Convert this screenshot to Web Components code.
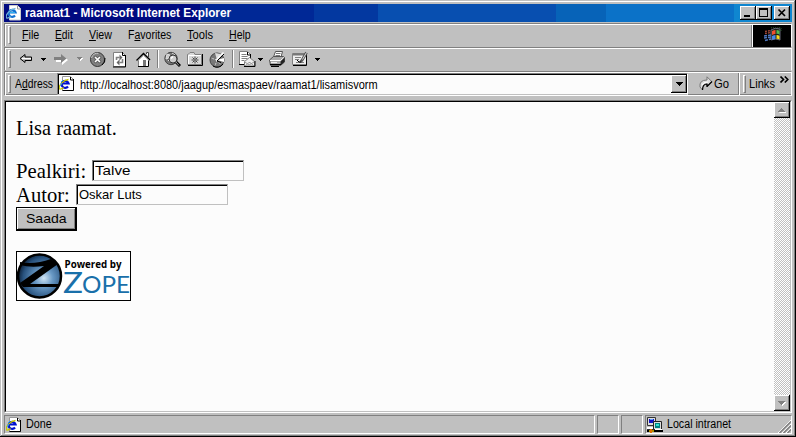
<!DOCTYPE html>
<html lang="et">
<head>
<meta charset="utf-8">
<title>raamat1 - Microsoft Internet Explorer</title>
<style>
  body {
    margin: 0;
    overflow: hidden;
    font-family: "Liberation Sans", sans-serif;
    font-size: 12px;
    color: #000;
  }
</style>
</head>
<body>
<browser-window>
  <title-bar>raamat1 - Microsoft Internet Explorer</title-bar>
  <menu-bar></menu-bar>
  <tool-bar></tool-bar>
  <address-bar>http://localhost:8080/jaagup/esmaspaev/raamat1/lisamisvorm</address-bar>
  <page-view slot="page"><book-form></book-form></page-view>
  <status-bar slot="status">Done</status-bar>
</browser-window>

<script>
/**
 * Registers an element whose open shadow root is cloned from a template.
 */
function define(name, html, setup) {
  const template = document.createElement('template');
  template.innerHTML = html;
  customElements.define(name, class extends HTMLElement {
    constructor() {
      super();
      this.attachShadow({ mode: 'open' });
      this.shadowRoot.appendChild(template.content.cloneNode(true));
    }

    connectedCallback() {
      if (setup) setup(this, this.shadowRoot);
    }
  });
}

// Drawings for the toolbar and the other bars, one user unit per pixel
const ICONS = {
  page: [16, 16, `
    <path d="M3.500 .5h8l3 3v11h-11z" fill="#fff" stroke="#999"/>
    <path d="M11.5 1v3h3M14.5 3v11.500h-11" fill="none" stroke="#000"/>
    <path d="M9 10.500a3.500 3.500 0 1 1 .6-3H4" fill="none" stroke="#0010d0" stroke-width="2.200"/>
    <path d="M.500 13C-1 10 4 4 9.500 3.500M.500 13q2 .5 4-1.500" fill="none" stroke="#c8c800" stroke-width="1.300"/>
    <path d="M2 6l2-2M1.500 10l1-3" stroke="#20a0ff"/>`],
  titlePage: [16, 16, `
    <path d="M3.500 .5h8l3 3v11.500h-11z" fill="#fff" stroke="#ccc"/>
    <path d="M11.500 1v3h3" fill="none" stroke="#999"/>
    <path d="M9 10.500a3.500 3.500 0 1 1 .6-3H4" fill="none" stroke="#1070d0" stroke-width="2.200"/>
    <path d="M.500 13C-1 10 4 4 9.500 3.500M.500 13q2 .5 4-1.500" fill="none" stroke="#70b0d8" stroke-width="1.300"/>
    <path d="M4 7.500h5" stroke="#30b0f0"/>`],
  back: [14, 12, `
    <path d="M1 5.5l5-4v2.5h6.5v3.500H6v2z" fill="#c0c0c0" stroke="#000"/>
    <path d="M3 5.500h9" stroke="#fff"/>`],
  forward: [15, 13, `
    <path d="M2 5h6V2l6 5-6 5V9H2z" fill="#fff"/>
    <path d="M0 4h7V1l5.500 4.500L7 10V7H0z" fill="#808080"/>`],
  stop: [17, 17, `
    <circle cx="8.500" cy="8.500" r="7" fill="#808080" stroke="#333"/>
    <path d="M2.500 7a6 6 0 0 1 7-4.700" fill="none" stroke="#c8c8c8"/>
    <path d="M13 14a7.500 7.500 0 0 0 3-7" fill="none" stroke="#000"/>
    <path d="M5.500 5.500l6 6m0-6l-6 6" stroke="#555" stroke-width="3"/>
    <path d="M6 6l5 5m0-5l-5 5" stroke="#fff" stroke-width="1.700"/>`],
  refresh: [14, 17, `
    <path d="M.500 1.500h9l3 3v11H.500z" fill="#fff" stroke="#808080"/>
    <path d="M9.500 1v3.500h3.500M12.500 4v12H0" fill="none" stroke="#000"/>
    <path d="M3.500 9V6.500h3M9.500 8v3.500h-3" fill="none" stroke="#808080" stroke-width="1.600"/>
    <path d="M6.500 3.500v6l3-3zM6.500 8.500v6l-3-3z" fill="#666"/>`],
  home: [15, 17, `
    <path d="M10.500 3V1.500h2V6" fill="#fff" stroke="#444"/>
    <path d="M2.500 9v6.500h10V9l-5-5z" fill="#fff"/>
    <path d="M2.500 9v6.500" stroke="#808080"/>
    <path d="M12.500 9v6.500H2" fill="none" stroke="#000"/>
    <path d="M.500 9.500l7-7 6.500 6.500" fill="none" stroke="#000" stroke-width="1.500"/>
    <path d="M1.500 10l6-5.500 5.500 5" fill="none" stroke="#aaa"/>
    <path d="M7 9h3v6H7z" fill="#777"/>`],
  search: [17, 17, `
    <circle cx="7" cy="7.500" r="6.200" fill="#777" stroke="#444"/>
    <path d="M3 3l3 1-1 3-3 1zM6 11l-2-2M8 2l3 2" fill="#ccc" stroke="#ddd"/>
    <path d="M12 11l4 4" stroke="#000" stroke-width="3"/>
    <path d="M12 11l3 3.500" stroke="#aaa"/>
    <circle cx="9" cy="8" r="4" fill="#ccc" stroke="#333"/>
    <path d="M7 7.500l2-2" stroke="#fff" stroke-width="1.500"/>`],
  favorites: [16, 16, `
    <path d="M1 3.500l2-2h4l1 2h6.500v10H.500v-10z" fill="#d8d8d8" stroke="#808080"/>
    <path d="M15.500 3v11.500H1" fill="none" stroke="#000"/>
    <path d="M1.500 13V4.500H14" fill="none" stroke="#fff"/>
    <path d="M8 5.500v7M4.500 9h7M5.500 6.500l5 5m0-5l-5 5" stroke="#444"/>
    <path d="M7.500 8.500h1v1h-1z" fill="#fff"/>`],
  history: [17, 17, `
    <circle cx="8" cy="9" r="7" fill="#777" stroke="#444"/>
    <path d="M8 9L2 7M8 9l-2 6M8 9l4 5" stroke="#ccc" stroke-dasharray="2 1"/>
    <path d="M8 9L6 2l6 1z" fill="#ddd"/>
    <path d="M8 9l7-2v4z" fill="#fff"/>
    <path d="M7 9.500L14.500 1.500" stroke="#fff" stroke-width="1.500"/>
    <path d="M8 10l4 1.500M8 10l7-7" stroke="#000"/>
    <path d="M14 13a7 7 0 0 1-10 2" fill="none" stroke="#000"/>`],
  mail: [17, 17, `
    <path d="M.500 .500h8l3 3v10H.500z" fill="#fff" stroke="#808080"/>
    <path d="M11.500 3v5M8.500 1v3h3M0 13.500h5" fill="none" stroke="#000"/>
    <path d="M2.500 3.500h5m-5 2h6m-6 2h6m-6 2h3" stroke="#808080"/>
    <path d="M5.500 10.500l5-4 5 4v4.500h-10z" fill="#eee" stroke="#808080"/>
    <path d="M6 15l4-3.500h1L15 15M6 11l4 3 5-3" fill="none" stroke="#999"/>
    <path d="M16 10v5.500H5" fill="none" stroke="#000"/>`],
  print: [17, 16, `
    <path d="M4.500 6l2-5.500h7L12 6z" fill="#fff" stroke="#555"/>
    <path d="M7 2.500h4.500M6.500 4.500h4.500" stroke="#777"/>
    <path d="M.500 9l4-3.500h10l1 1V11l-4 3.500h-10z" fill="#aaa" stroke="#555"/>
    <path d="M1 9.500h10.500l3.500-3" fill="none" stroke="#fff"/>
    <path d="M11.500 14.500v-4l4-4V11z" fill="#222"/>
    <path d="M1 13.500h11M2 15.500h8" stroke="#000"/>
    <path d="M2 11.500h6" stroke="#eee"/>`],
  edit: [17, 16, `
    <path d="M.500 2.500h14v11H.500z" fill="#eee" stroke="#808080"/>
    <path d="M1 3.500h14" stroke="#777" stroke-width="2"/>
    <path d="M14.500 3v11.500H1" fill="none" stroke="#000"/>
    <path d="M3 6.500h6m-6 2h4m-3 3h8" stroke="#808080"/>
    <path d="M14.500 1.500l-4 7-2 2.500" fill="none" stroke="#555" stroke-width="2.800"/>
    <path d="M14.500 1.500l-4 7" stroke="#ddd"/>
    <path d="M5 9l2 2h2" fill="none" stroke="#000"/>`],
  caret: [5, 3, '<path d="M0 0h5v1H4v1H3v1H2V2H1V1H0z"/>'],
  caretDim: [6, 4, `
    <path d="M1 1h5v1H5v1H4v1H3V3H2V2H1z" fill="#fff"/>
    <path d="M0 0h5v1H4v1H3v1H2V2H1V1H0z" fill="#808080"/>`],
  drop: [7, 4, '<path d="M0 0h7v1H6v1H5v1H4v1H3V3H2V2H1V1H0z"/>'],
  up: [8, 5, `
    <path d="M1 5h7V4H4V1z" fill="#fff"/>
    <path d="M3 0h1v1h1v1h1v1h1v1H0V3h1V2h1V1h1z" fill="#808080"/>`],
  down: [8, 5, `
    <path d="M1 1h7v1H7v1H6v1H5v1H4V4H3V3H2V2H1z" fill="#fff"/>
    <path d="M0 0h7v1H6v1H5v1H4v1H3V3H2V2H1V1H0z" fill="#808080"/>`],
  go: [14, 15, `
    <path d="M3.500 14L1 11Q0 4 8 4V.800l5 5-5 4.700V8q-4 0-4.500 6z" fill="#ddd" stroke="#777"/>
    <path d="M8 10.500l5-5M3.500 14q0-6 4.500-6v3" fill="none" stroke="#000" stroke-width="1.200"/>
    <path d="M3 9q1-3 6-3" fill="none" stroke="#fff"/>`],
  more: [9, 7, '<path d="M.500 .500l3 3-3 3M4.800 .500l3 3-3 3" fill="none" stroke="#000" stroke-width="1.600"/>'],
  intranet: [16, 16, `
    <path d="M.500 .500h8v8h-8z" fill="#ddd" stroke="#333"/>
    <path d="M2 2h5v4H2z" fill="#1010c8"/><path d="M3 2h3v1H3z" fill="#60a0ff"/>
    <path d="M0 10h7v2H0z" fill="#fff"/><path d="M0 12h7v1H0z" fill="#333"/>
    <path d="M6.500 4.500h8v8h-8z" fill="#ddd" stroke="#222"/>
    <path d="M8 6h5v5H8z" fill="#008080"/><path d="M9 7h3v2H9z" fill="#30e0d0"/>
    <path d="M0 14h16" stroke="#000" stroke-width="2"/>
    <path d="M8 12.500h7" stroke="#fff"/><path d="M2 14h5" stroke="#e8c000" stroke-width="1.500"/>
    <path d="M3 12h2v4H3z" fill="#e07000"/>`],
  flag: [19, 17, `
    <path d="M7 3q4-3 9-1v11q-4-2-9 0z" fill="#182018" stroke="#667"/>
    <path d="M8 4q2-1 3.500-1v4Q10 7 8 8z" fill="#f05030"/>
    <path d="M12.500 3q2 0 3 1v3.500q-2-1-3-.500z" fill="#50b850"/>
    <path d="M8 9q2-1 3.500-1v4q-1.500 0-3.500 1z" fill="#4888e8"/>
    <path d="M12.500 8q2 0 3 1v3.500q-2-1-3-.500z" fill="#f8d820"/>
    <path d="M1 4.500l6-1M1 6.500l6-1" stroke="#a04838" stroke-width="1.400" stroke-dasharray="2 1"/>
    <path d="M0 9l7-1M0 11l7-1M1 13.500l6-1.500" stroke="#5078c0" stroke-width="1.500" stroke-dasharray="3 1"/>
    <path d="M7 1q5-2 10 0v3" fill="none" stroke="#386838" stroke-dasharray="1 1"/>`],
  min: [16, 14, '<path d="M4 9h6v2H4z"/>'],
  max: [16, 14, '<path d="M3 2h9v9H3zM4 4v6h7V4z" fill-rule="evenodd"/>'],
  close: [16, 14, '<path d="M4.500 3.500l6.500 6.500M11 3.500l-6.500 6.500" stroke="#000" stroke-width="1.700"/>'],
};

define('ui-icon', `
  <style>
    :host { display: block; flex: none; }
    svg { display: block; }
  </style>
`, (host, root) => {
  if (root.querySelector('svg')) return;
  const [w, h, body] = ICONS[host.getAttribute('name')];
  root.innerHTML += `<svg width="${w}" height="${h}" viewBox="0 0 ${w} ${h}">${body}</svg>`;
});

// A label squeezed to a set width, like the narrow system bitmap font
define('ui-label', `
  <style>
    :host { display: block; flex: none; white-space: nowrap; line-height: 14px; }
    span { display: inline-block; transform-origin: 0 50%; }
  </style>
  <span><slot></slot></span>
`, (host, root) => {
  const span = root.querySelector('span');
  const width = Number(host.getAttribute('width'));
  host.style.width = `${width}px`;
  span.style.transform = `scaleX(${width / span.offsetWidth})`;
});

define('ui-grip', `
  <style>
    :host {
      display: block;
      flex: none;
      box-sizing: border-box;
      width: 3px;
      height: 18px;
      border: 1px solid;
      border-color: #fff #808080 #808080 #fff;
    }
  </style>
`);

define('ui-sep', `
  <style>
    :host {
      display: block;
      flex: none;
      width: 1px;
      height: 18px;
      background: #808080;
      border-right: 1px solid #fff;
    }
  </style>
`);

define('ui-button', `
  <style>
    :host {
      display: flex;
      flex: none;
      align-items: center;
      justify-content: center;
      box-sizing: border-box;
      width: 16px;
      height: 16px;
      background: #c0c0c0;
      box-shadow: inset -1px -1px #000, inset 1px 1px #fff, inset -2px -2px #808080;
    }
  </style>
  <slot></slot>
`);

define('browser-window', `
  <style>
    :host {
      display: flex;
      flex-direction: column;
      box-sizing: border-box;
      width: 796px;
      height: 437px;
      padding: 4px 4px 3px;
      background: #c0c0c0;
      box-shadow: inset -1px -1px #000, inset 1px 1px #c0c0c0, inset -2px -2px #808080, inset 2px 2px #fff;
    }
    ::slotted([slot="page"]) { margin-top: 4px; }
    ::slotted([slot="status"]) { margin-top: 2px; }
  </style>
  <slot></slot>
  <slot name="page"></slot>
  <slot name="status"></slot>
`);

define('title-bar', `
  <style>
    :host {
      display: flex;
      flex: none;
      align-items: center;
      box-sizing: border-box;
      height: 18px;
      padding: 0 2px;
      margin-bottom: 1px;
      color: #fff;
      font-weight: bold;
      background: linear-gradient(90deg, #000a80 196px, #002896 196px 310px, #0338a0 310px 374px,
        #084fb0 374px 552px, #0763b8 552px 602px, #0b72c8 602px 730px, #0f86d0 730px);
    }
    ui-label { margin: 0 auto 0 3px; }
    ui-button { height: 14px; }
    ui-button:last-child { margin-left: 2px; }
  </style>
  <ui-icon name="titlePage"></ui-icon>
  <ui-label width="206"><slot></slot></ui-label>
  <ui-button><ui-icon name="min"></ui-icon></ui-button>
  <ui-button><ui-icon name="max"></ui-icon></ui-button>
  <ui-button><ui-icon name="close"></ui-icon></ui-button>
`);

// Shared frame of the three bands under the title
const BAND = `
  :host {
    display: flex;
    flex: none;
    align-items: center;
    box-sizing: border-box;
    height: 24px;
    border: 1px solid #fff;
    border-color: #808080 #fff transparent #808080;
    box-shadow: inset 1px 1px #fff, 1px 0 #c0c0c0;
  }
  ui-grip { margin-left: 3px; }
`;

define('menu-bar', `
  <style>
    ${BAND}
    nav { display: flex; gap: 16px; margin-left: 11px; }
    .brand {
      display: flex;
      align-items: center;
      box-sizing: border-box;
      width: 38px;
      height: 22px;
      margin: 1px 0 0 auto;
      padding-left: 11px;
      background: #000;
      box-shadow: -1px 0 #fff, -2px 0 #808080;
    }
  </style>
  <ui-grip></ui-grip>
  <nav>
    <ui-label width="17"><u>F</u>ile</ui-label>
    <ui-label width="18"><u>E</u>dit</ui-label>
    <ui-label width="23"><u>V</u>iew</ui-label>
    <ui-label width="43">F<u>a</u>vorites</ui-label>
    <ui-label width="26"><u>T</u>ools</ui-label>
    <ui-label width="22"><u>H</u>elp</ui-label>
  </nav>
  <div class="brand"><ui-icon name="flag"></ui-icon></div>
`);

define('tool-bar', `
  <style>
    ${BAND}
    .set { display: flex; align-items: center; }
  </style>
  <ui-grip></ui-grip>
  <div class="set" style="gap: 8px; margin-left: 8px">
    <ui-icon name="back"></ui-icon>
    <ui-icon name="caret"></ui-icon>
    <ui-icon name="forward"></ui-icon>
    <ui-icon name="caretDim"></ui-icon>
  </div>
  <div class="set" style="gap: 7px; margin: 0 6px 0 6px">
    <ui-icon name="stop"></ui-icon>
    <ui-icon name="refresh"></ui-icon>
    <ui-icon name="home" style="margin-left: 2px"></ui-icon>
  </div>
  <ui-sep></ui-sep>
  <div class="set" style="gap: 6px; margin: 0 6px 0 5px">
    <ui-icon name="search"></ui-icon>
    <ui-icon name="favorites"></ui-icon>
    <ui-icon name="history"></ui-icon>
  </div>
  <ui-sep></ui-sep>
  <div class="set" style="gap: 6px; margin-left: 5px">
    <div class="set" style="gap: 2px">
      <ui-icon name="mail"></ui-icon>
      <ui-icon name="caret"></ui-icon>
    </div>
    <ui-icon name="print"></ui-icon>
    <ui-icon name="edit"></ui-icon>
    <ui-icon name="caret"></ui-icon>
  </div>
`);

define('address-bar', `
  <style>
    ${BAND}
    :host { height: 25px; border-bottom-color: #fff; box-shadow: inset 1px 1px #fff, inset 0 -1px #808080; }
    .field {
      display: flex;
      flex: none;
      align-items: center;
      box-sizing: border-box;
      width: 631px;
      height: 22px;
      margin-left: 4px;
      padding: 1px 0 0 1px;
      background: #fcfcfc;
      border: 1px solid;
      border-color: #808080 #fff #c0c0c0 #808080;
      box-shadow: inset 1px 1px #000;
    }
    .field ui-label { margin: 1px auto 0 5px; }
    ui-button { height: 18px; }
    ui-sep { height: 22px; }
    .links { margin-left: 3px; }
  </style>
  <ui-grip></ui-grip>
  <ui-label width="38" style="margin-left: 4px">A<u>d</u>dress</ui-label>
  <div class="field">
    <ui-icon name="page"></ui-icon>
    <ui-label width="298"><slot></slot></ui-label>
    <ui-button><ui-icon name="drop"></ui-icon></ui-button>
  </div>
  <ui-icon name="go" style="margin-left: 11px"></ui-icon>
  <ui-label width="15" style="margin: 0 9px 0 1px">Go</ui-label>
  <ui-sep></ui-sep>
  <ui-grip class="links"></ui-grip>
  <ui-label width="26" style="margin-left: 3px">Links</ui-label>
  <ui-icon name="more" style="margin: -8px 0 0 5px"></ui-icon>
`);

define('page-view', `
  <style>
    :host {
      display: flex;
      flex: 1;
      min-height: 0;
      box-sizing: border-box;
      background: #fcfcfc;
      border: 1px solid;
      border-color: #808080 #fff #fff #808080;
    }
    .inner { display: flex; flex: 1; border: 1px solid; border-color: #000 #c0c0c0 #c0c0c0 #000; }
    main { flex: 1; padding: 14px 10px; }
    .scroll {
      display: flex;
      flex-direction: column;
      justify-content: space-between;
      width: 16px;
      background: repeating-conic-gradient(#c0c0c0 0 25%, #fff 0 50%) 0 0 / 2px 2px;
    }
  </style>
  <div class="inner">
    <main><slot></slot></main>
    <div class="scroll">
      <ui-button><ui-icon name="up"></ui-icon></ui-button>
      <ui-button><ui-icon name="down"></ui-icon></ui-button>
    </div>
  </div>
`);

define('text-field', `
  <style>
    :host {
      display: flex;
      box-sizing: border-box;
      width: 152px;
      height: 21px;
      margin-top: 1px;
      padding: 3px 0 0 2px;
      font: 13px "Liberation Sans", sans-serif;
      background: #fcfcfc;
      border: 1px solid;
      border-color: #808080 #c0c0c0 #c0c0c0 #808080;
      box-shadow: inset 1px 1px #000;
    }
  </style>
  <slot></slot>
`);

define('book-form', `
  <style>
    :host { display: block; font: 21px "Liberation Serif", serif; }
    p { margin: 0 0 19px; height: 24px; }
    ui-label { line-height: 24px; }
    .row { display: flex; gap: 6px; height: 24px; }
    text-field ui-label, .submit ui-label { line-height: 14px; }
    .submit {
      display: flex;
      justify-content: center;
      box-sizing: border-box;
      width: 61px;
      height: 24px;
      margin-bottom: 20px;
      padding-top: 4px;
      border: 1px solid #000;
      background: #c0c0c0;
      box-shadow: inset -1px -1px #000, inset 1px 1px #fff, inset -2px -2px #808080;
      font: 13px "Liberation Sans", sans-serif;
    }
  </style>
  <p><ui-label width="101">Lisa raamat.</ui-label></p>
  <div class="row">
    <ui-label width="70">Pealkiri:</ui-label>
    <text-field><ui-label width="35">Talve</ui-label></text-field>
  </div>
  <div class="row">
    <ui-label width="54">Autor:</ui-label>
    <text-field><ui-label width="63">Oskar Luts</ui-label></text-field>
  </div>
  <div class="submit"><ui-label width="41">Saada</ui-label></div>
  <zope-badge></zope-badge>
`);

define('zope-badge', `
  <style>
    :host { display: block; width: 115px; height: 50px; }
    svg { display: block; }
  </style>
  <svg width="115" height="50" viewBox="0 0 115 50">
    <defs>
      <radialGradient id="ball" cx=".6" cy=".55" r=".6">
        <stop offset="0" stop-color="#d0e4f4"/>
        <stop offset=".35" stop-color="#6898c4"/>
        <stop offset=".8" stop-color="#28527e"/>
        <stop offset="1" stop-color="#0c2038"/>
      </radialGradient>
    </defs>
    <rect x=".5" y=".5" width="114" height="49" fill="#fff" stroke="#000"/>
    <circle cx="23.500" cy="25" r="21.500" fill="url(#ball)" stroke="#000" stroke-width="2.500"/>
    <path d="M4 11Q18 14 35 8L42 13 14 33H43L42 36H7L4 32 28 15Q14 17 4 14z" fill="#000"/>
    <text x="48.500" y="17" textLength="57" lengthAdjust="spacingAndGlyphs" font-family="Open Sans" font-weight="bold" font-size="11">Powered by</text>
    <g font-family="Lato, sans-serif" fill="#1a70aa">
      <text x="47" y="42" textLength="20" lengthAdjust="spacingAndGlyphs" font-size="29">Z</text>
      <text x="66" y="42" textLength="48" lengthAdjust="spacingAndGlyphs" font-size="24">OPE</text>
    </g>
  </svg>
`);

define('status-bar', `
  <style>
    :host { display: flex; flex: none; gap: 2px; height: 19px; }
    div {
      display: flex;
      align-items: center;
      box-sizing: border-box;
      width: 22px;
      border: 1px solid;
      border-color: #808080 #fff #fff #808080;
    }
    .text { flex: 1; padding-left: 1px; }
    .text ui-label { margin: -2px 0 0 4px; }
    .zone { width: 147px; padding-left: 1px; }
    .zone ui-label { margin: -2px auto 0 4px; }
    svg { align-self: flex-end; }
  </style>
  <div class="text"><ui-icon name="page"></ui-icon><ui-label width="26"><slot></slot></ui-label></div>
  <div></div>
  <div></div>
  <div class="zone">
    <ui-icon name="intranet"></ui-icon>
    <ui-label width="64">Local intranet</ui-label>
    <svg width="13" height="13" viewBox="0 0 13 13">
      <path d="M0 13L13 0M4 13l9-9M8 13l5-5" stroke="#fff"/>
      <path d="M1.500 13L13 1.500M5.500 13L13 5.500M9.500 13L13 9.500" stroke="#808080" stroke-width="1.500"/>
    </svg>
  </div>
`);
</script>
</body>
</html>
